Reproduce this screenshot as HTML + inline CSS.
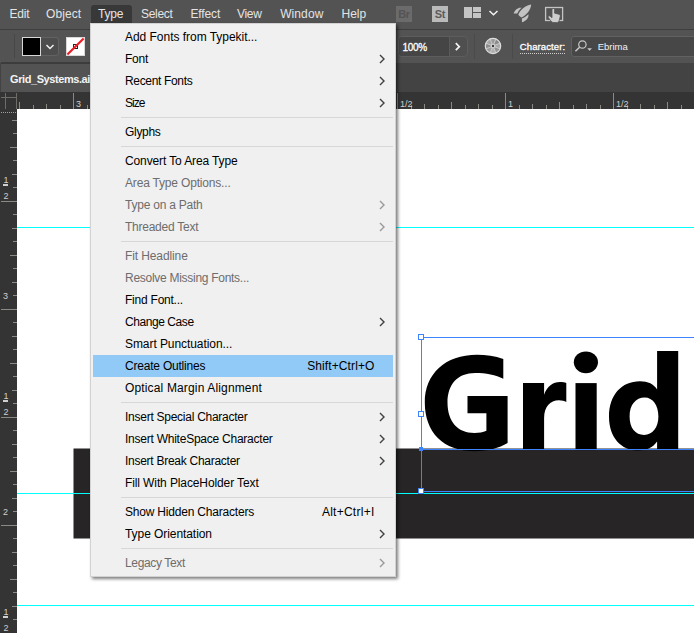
<!DOCTYPE html>
<html>
<head>
<meta charset="utf-8">
<style>
*{box-sizing:border-box;margin:0;padding:0}
html,body{width:694px;height:635px;overflow:hidden;background:#fff;font-family:"Liberation Sans",sans-serif;}
#app{position:relative;width:694px;height:635px;overflow:hidden;background:#fff}
.abs{position:absolute}
/* top bars */
#menubar{left:0;top:0;width:694px;height:29px;background:#535353}
#menubar span{position:absolute;top:6px;font-size:12px;color:#e4e4e4;line-height:16px;white-space:nowrap}
#typehl{left:91px;top:5px;width:41px;height:18px;background:#383838;border-radius:3px 3px 0 0}
#ctrlbar{left:0;top:29px;width:694px;height:34px;background:#535353;border-top:1px solid #3e3e3e}
#tabbar{left:0;top:63px;width:694px;height:29px;background:#434343}
#tab{left:1px;top:62px;width:150px;height:30px;background:#535353;border-top:2px solid #3c3c3c}
#tab span{position:absolute;left:9px;top:8px;font-size:11px;font-weight:bold;color:#f4f4f4;line-height:14px;letter-spacing:-0.42px;white-space:nowrap}
#hruler{left:0;top:92px;width:694px;height:17px;background:#343434}
#vruler{left:0;top:109px;width:17px;height:524px;background:#343434}
.rt{position:absolute;font-size:9px;color:#cfcfcf;line-height:10px;white-space:nowrap}
/* canvas */
/* menu */
#menu{left:90px;top:23px;width:306px;height:554px;background:#f0f0f0;border:1px solid #d2d2d2;box-shadow:2px 2px 3px rgba(0,0,0,.5)}
.mi{position:absolute;left:2px;width:300px;height:22px;font-size:12px;color:#000;line-height:22px;white-space:nowrap}
.mi .l{position:absolute;left:32px;top:0}
.mi .s{position:absolute;right:18.5px;top:0}
.mi.d{color:#6d6d6d}
.mi.h{background:#91c9f7}
.sep{position:absolute;left:30px;width:272px;height:1px;background:#d7d7d7}
.arr{position:absolute;left:286px;top:6px;width:6px;height:10px}
</style>
</head>
<body>
<div id="app">
  <!-- canvas -->
<!--CANVAS-->
<svg class="abs" style="left:0;top:0" width="694" height="635" viewBox="0 0 694 635">
  <rect x="17" y="227" width="677" height="1" fill="#00ffff" shape-rendering="crispEdges"/>
  <rect x="73.5" y="448.5" width="630" height="90" fill="#272525"/>
  <rect x="17" y="493" width="677" height="1" fill="#00ffff" shape-rendering="crispEdges"/>
  <rect x="17" y="605" width="677" height="1" fill="#00ffff" shape-rendering="crispEdges"/>
  <g fill="#000">
    <!-- G -->
    <path d="M503.3 359 C495 356 486 354.7 477 354.7 C445 354.7 424.8 374 424.8 402.4 C424.8 432 443 451.2 475 451.2 C488 451.2 499 448 507.6 443 L507.6 396.1 L467.5 396.1 L467.5 413.3 L486.4 413.3 L486.4 430.7 C483 432 479 433 474.5 433 C457 433 447.5 421 447.5 402.5 C447.5 384 458 373 475 373 C486 373 496 375 503.3 378.7 Z"/>
    <!-- r -->
    <path d="M523 383.1 L544.1 383.1 L544.1 394.8 C547 386.5 553 382 560 382 C562.5 382 564.8 382.3 566.3 382.9 L566.3 402 C564.5 401 562 400.3 559 400.3 C550 400.3 544.1 407 544.1 418 L544.1 450 L523 450 Z"/>
    <!-- i -->
    <rect x="575.5" y="383.1" width="21.2" height="67"/>
    <ellipse cx="585.9" cy="362.3" rx="12.1" ry="10.9"/>
    <!-- d -->
    <path d="M657.1 351.1 L678.2 351.1 L678.2 450 L657.1 450 L657.1 441.6 C653 447.5 646.5 450.6 638.5 450.6 C621 450.6 609 437.5 609 416.5 C609 395 621.5 381.2 640 381.2 C648 381.2 653.8 384 657.1 389.4 Z M658.4 416.5 C658.4 405.5 652.8 397.6 644.8 397.6 C635.6 397.6 629.6 405 629.6 416.5 C629.6 428 635.2 434.9 644.2 434.9 C652.4 434.9 658.4 427.5 658.4 416.5 Z" fill-rule="evenodd"/>
  </g>
  <g shape-rendering="crispEdges" fill="#3f84ff">
    <rect x="421" y="337" width="273" height="1"/>
    <rect x="421" y="337" width="1" height="155"/>
    <rect x="421" y="449" width="273" height="1"/>
    <rect x="421" y="491" width="273" height="1"/>
    <rect x="419" y="447" width="4" height="4"/>
  </g>
  <g shape-rendering="crispEdges" fill="#fff" stroke="#3f84ff" stroke-width="1">
    <rect x="418.5" y="334.5" width="5" height="5"/>
    <rect x="418.5" y="411.5" width="5" height="5"/>
    <rect x="418.5" y="488.5" width="5" height="5"/>
  </g>
</svg>
<!--/CANVAS-->

  <!-- bars -->
  <div id="menubar" class="abs">
    <div id="typehl" class="abs"></div>
    <span style="left:9.6px;letter-spacing:-0.25px">Edit</span>
    <span style="left:46px;letter-spacing:0.1px">Object</span>
    <span style="left:98px;letter-spacing:-0.2px">Type</span>
    <span style="left:141px;letter-spacing:-0.31px">Select</span>
    <span style="left:190.4px;letter-spacing:-0.11px">Effect</span>
    <span style="left:236.9px;letter-spacing:-0.27px">View</span>
    <span style="left:280.2px;letter-spacing:0.09px">Window</span>
    <span style="left:341.5px;letter-spacing:-0.02px">Help</span>
  </div>
  <div id="ctrlbar" class="abs"></div>
<!--CTRL-->
  <div class="abs" style="left:14px;top:34px;width:1px;height:24px;background:#474747"></div>
  <div class="abs" style="left:41px;top:37px;width:18px;height:19px;border:1px solid #626262;border-left:none;border-radius:0 3px 3px 0;background:#4d4d4d"></div>
  <div class="abs" style="left:22px;top:37px;width:19px;height:19px;background:#000;border:1px solid #d8d8d8"></div>
  <svg class="abs" style="left:45px;top:42.5px" width="10" height="8" viewBox="0 0 10 8"><path d="M1.5 2 L5 5.5 L8.5 2" fill="none" stroke="#f0f0f0" stroke-width="1.5"/></svg>
  <div class="abs" style="left:66px;top:37px;width:19px;height:19px;background:#fff;border:1px solid #d8d8d8"></div>
  <svg class="abs" style="left:66px;top:37px" width="19" height="19" viewBox="0 0 19 19"><rect x="7.5" y="7.5" width="4" height="4" fill="none" stroke="#222" stroke-width="1"/><path d="M1.4 17.6 L17.6 1.6" stroke="#ee1c24" stroke-width="2.1"/></svg>
  <!-- opacity -->
  <div class="abs" style="left:398px;top:36px;width:70px;height:21px;background:#4f4f4f;border:1px solid #5d5d5d;border-radius:4px"></div><div class="abs" style="left:399px;top:37px;width:51px;height:19px;background:#454545;border-radius:3px 0 0 3px;border-right:1px solid #5a5a5a"></div>
  
  <span class="abs" style="left:402.5px;top:41px;font-size:10px;line-height:13px;color:#fff;letter-spacing:-0.34px;-webkit-text-stroke:0.3px #fff">100%</span>
  <svg class="abs" style="left:454px;top:41px" width="8" height="11" viewBox="0 0 8 11"><path d="M1.8 2.2 L5.3 5.7 L1.8 9.2" fill="none" stroke="#f4f4f4" stroke-width="1.7"/></svg>
  <div class="abs" style="left:474px;top:34px;width:1px;height:25px;background:#4a4a4a"></div>
  <svg class="abs" style="left:484px;top:37px" width="18" height="18" viewBox="0 0 18 18"><path d="M9.0 9.0 L6.09 1.98 A7.6 7.6 0 0 1 11.91 1.98 Z" fill="#9a9a9a"/><path d="M9.0 9.0 L11.91 1.98 A7.6 7.6 0 0 1 16.02 6.09 Z" fill="#8a8a8a"/><path d="M9.0 9.0 L16.02 6.09 A7.6 7.6 0 0 1 16.02 11.91 Z" fill="#a8a8a8"/><path d="M9.0 9.0 L16.02 11.91 A7.6 7.6 0 0 1 11.91 16.02 Z" fill="#949494"/><path d="M9.0 9.0 L11.91 16.02 A7.6 7.6 0 0 1 6.09 16.02 Z" fill="#b0b0b0"/><path d="M9.0 9.0 L6.09 16.02 A7.6 7.6 0 0 1 1.98 11.91 Z" fill="#9e9e9e"/><path d="M9.0 9.0 L1.98 11.91 A7.6 7.6 0 0 1 1.98 6.09 Z" fill="#8e8e8e"/><path d="M9.0 9.0 L1.98 6.09 A7.6 7.6 0 0 1 6.09 1.98 Z" fill="#a4a4a4"/><path d="M9.0 9.0 L6.09 1.98 M9.0 9.0 L11.91 1.98 M9.0 9.0 L16.02 6.09 M9.0 9.0 L16.02 11.91 M9.0 9.0 L11.91 16.02 M9.0 9.0 L6.09 16.02 M9.0 9.0 L1.98 11.91 M9.0 9.0 L1.98 6.09" stroke="#d4d4d4" stroke-width="0.9" fill="none"/><circle cx="9" cy="9" r="7.7" fill="none" stroke="#dedede" stroke-width="1.2"/><circle cx="9" cy="9" r="2.3" fill="#d8d8d8"/><circle cx="9" cy="9" r="1.2" fill="#3a3a3a"/></svg>
  <div class="abs" style="left:512px;top:34px;width:1px;height:25px;background:#4a4a4a"></div>
  <span class="abs" style="left:519.8px;top:40.5px;font-size:9.5px;line-height:12px;color:#fff;letter-spacing:0.1px;-webkit-text-stroke:0.3px #fff;border-bottom:1px dotted #d0d0d0;white-space:nowrap">Character:</span>
  <div class="abs" style="left:571px;top:36px;width:130px;height:21px;background:#474747;border:1px solid #616161;border-radius:3px"></div>
  <svg class="abs" style="left:574px;top:39px" width="20" height="16" viewBox="0 0 20 16"><circle cx="8.4" cy="5.5" r="3.7" fill="none" stroke="#c8c8c8" stroke-width="1.2"/><path d="M5.6 8.2 L1.4 12.3" stroke="#c8c8c8" stroke-width="1.5"/><path d="M13.2 9.3 L18 9.3 L15.6 11.7 Z" fill="#c8c8c8"/></svg>
  <span class="abs" style="left:597.7px;top:40.5px;font-size:9.5px;line-height:12px;color:#f2f2f2;letter-spacing:0px">Ebrima</span>
<!--/CTRL-->
  <div id="tabbar" class="abs"></div>
  <div id="tab" class="abs"><span>Grid_Systems.ai</span></div>
  <!--ICONS-->
  <div class="abs" style="left:396px;top:6px;width:16px;height:16px;background:#6b6b6b;color:#545454;font-size:11px;font-weight:bold;line-height:16px;text-align:center;letter-spacing:-0.3px">Br</div>
  <div class="abs" style="left:432px;top:6px;width:16px;height:16px;background:#bababa;color:#5c5c5c;font-size:11px;font-weight:bold;line-height:16px;text-align:center;letter-spacing:-0.3px">St</div>
  <div class="abs" style="left:464px;top:7px;width:8px;height:11px;background:#c4c4c4"></div>
  <div class="abs" style="left:473px;top:7px;width:8px;height:5px;background:#c4c4c4"></div>
  <div class="abs" style="left:473px;top:13px;width:8px;height:5px;background:#c4c4c4"></div>
  <svg class="abs" style="left:488px;top:9px" width="11" height="8" viewBox="0 0 11 8"><path d="M1.5 2 L5.5 5.8 L9.5 2" fill="none" stroke="#f4f4f4" stroke-width="1.5"/></svg>
  <svg class="abs" style="left:512px;top:3px" width="22" height="22" viewBox="0 0 22 22"><g fill="#c3c3c3"><path d="M19.2 1.5 C13.5 2.3 8.3 6.8 6.3 11.6 C7 12.8 8.4 14.1 9.6 14.6 C14.3 12.2 18.8 7 19.2 1.5 Z"/><path d="M9.6 4.7 C6 4.2 3 6.6 1.6 10.5 L5.3 10.6 C6.1 8.4 7.6 6.3 9.6 4.7 Z"/><path d="M16.4 11.2 C17 14.6 14.6 17.6 10 19.3 L9.9 15.6 C12.3 14.6 14.6 13.1 16.4 11.2 Z"/></g></svg>
  <svg class="abs" style="left:544px;top:5px" width="21" height="19" viewBox="0 0 21 19"><rect x="1.6" y="2.5" width="17" height="13" fill="none" stroke="#c4c4c4" stroke-width="1.3"/><path d="M8 4.6 C8 3 10.6 3 10.6 4.6 L10.6 8.2 L14.8 9.2 C16 9.5 16.4 10.4 16.2 11.5 L15.4 15 C15 16.8 14 17.6 12.4 17.6 L10 17.6 C8.6 17.6 7.8 17.1 7 16.1 L4.3 12.6 C3.5 11.4 4.9 10.2 6 11.1 L8 12.7 Z" fill="#cdcdcd" stroke="#535353" stroke-width="0.8"/></svg>
<!--/ICONS-->
  <div id="hruler" class="abs"></div>
  <div id="vruler" class="abs"></div>
<!--RUL-->
<svg class="abs" style="left:0;top:92px" width="694" height="17" viewBox="0 0 694 17" shape-rendering="crispEdges"><rect x="19" y="10" width="1" height="7" fill="#8b8983"/><rect x="33" y="13" width="1" height="4" fill="#8b8983"/><rect x="46" y="12" width="1" height="5" fill="#8b8983"/><rect x="60" y="13" width="1" height="4" fill="#8b8983"/><rect x="73" y="1" width="1" height="16" fill="#8b8983"/><rect x="87" y="13" width="1" height="4" fill="#8b8983"/><rect x="100" y="12" width="1" height="5" fill="#8b8983"/><rect x="114" y="13" width="1" height="4" fill="#8b8983"/><rect x="127" y="10" width="1" height="7" fill="#8b8983"/><rect x="141" y="13" width="1" height="4" fill="#8b8983"/><rect x="154" y="12" width="1" height="5" fill="#8b8983"/><rect x="168" y="13" width="1" height="4" fill="#8b8983"/><rect x="181" y="1" width="1" height="16" fill="#8b8983"/><rect x="195" y="13" width="1" height="4" fill="#8b8983"/><rect x="208" y="12" width="1" height="5" fill="#8b8983"/><rect x="222" y="13" width="1" height="4" fill="#8b8983"/><rect x="235" y="10" width="1" height="7" fill="#8b8983"/><rect x="249" y="13" width="1" height="4" fill="#8b8983"/><rect x="262" y="12" width="1" height="5" fill="#8b8983"/><rect x="276" y="13" width="1" height="4" fill="#8b8983"/><rect x="289" y="1" width="1" height="16" fill="#8b8983"/><rect x="303" y="13" width="1" height="4" fill="#8b8983"/><rect x="316" y="12" width="1" height="5" fill="#8b8983"/><rect x="330" y="13" width="1" height="4" fill="#8b8983"/><rect x="343" y="10" width="1" height="7" fill="#8b8983"/><rect x="357" y="13" width="1" height="4" fill="#8b8983"/><rect x="370" y="12" width="1" height="5" fill="#8b8983"/><rect x="384" y="13" width="1" height="4" fill="#8b8983"/><rect x="397" y="1" width="1" height="16" fill="#8b8983"/><rect x="411" y="13" width="1" height="4" fill="#8b8983"/><rect x="424" y="12" width="1" height="5" fill="#8b8983"/><rect x="438" y="13" width="1" height="4" fill="#8b8983"/><rect x="451" y="10" width="1" height="7" fill="#8b8983"/><rect x="465" y="13" width="1" height="4" fill="#8b8983"/><rect x="478" y="12" width="1" height="5" fill="#8b8983"/><rect x="492" y="13" width="1" height="4" fill="#8b8983"/><rect x="505" y="1" width="1" height="16" fill="#8b8983"/><rect x="519" y="13" width="1" height="4" fill="#8b8983"/><rect x="532" y="12" width="1" height="5" fill="#8b8983"/><rect x="546" y="13" width="1" height="4" fill="#8b8983"/><rect x="559" y="10" width="1" height="7" fill="#8b8983"/><rect x="573" y="13" width="1" height="4" fill="#8b8983"/><rect x="586" y="12" width="1" height="5" fill="#8b8983"/><rect x="600" y="13" width="1" height="4" fill="#8b8983"/><rect x="613" y="1" width="1" height="16" fill="#8b8983"/><rect x="627" y="13" width="1" height="4" fill="#8b8983"/><rect x="640" y="12" width="1" height="5" fill="#8b8983"/><rect x="654" y="13" width="1" height="4" fill="#8b8983"/><rect x="667" y="10" width="1" height="7" fill="#8b8983"/><rect x="681" y="13" width="1" height="4" fill="#8b8983"/><rect x="694" y="12" width="1" height="5" fill="#8b8983"/><rect x="5" y="1" width="1" height="16" fill="#6f6d68"/><rect x="16" y="1" width="1" height="16" fill="#6f6d68"/><rect x="1" y="5" width="16" height="1" fill="#6f6d68"/></svg>
<span class="rt" style="left:76px;top:99px">3</span>
<span class="rt" style="left:184px;top:99px">1/2</span>
<span class="rt" style="left:400px;top:99px">1/2</span>
<span class="rt" style="left:508px;top:99px">1</span>
<span class="rt" style="left:616px;top:99px">1/2</span>
<svg class="abs" style="left:0;top:109px" width="17" height="526" viewBox="0 0 17 526" shape-rendering="crispEdges"><rect x="12" y="11" width="5" height="1" fill="#8b8983"/><rect x="13" y="24" width="4" height="1" fill="#8b8983"/><rect x="10" y="38" width="7" height="1" fill="#8b8983"/><rect x="13" y="51" width="4" height="1" fill="#8b8983"/><rect x="12" y="65" width="5" height="1" fill="#8b8983"/><rect x="13" y="78" width="4" height="1" fill="#8b8983"/><rect x="1" y="92" width="16" height="1" fill="#8b8983"/><rect x="13" y="105" width="4" height="1" fill="#8b8983"/><rect x="12" y="119" width="5" height="1" fill="#8b8983"/><rect x="13" y="132" width="4" height="1" fill="#8b8983"/><rect x="10" y="146" width="7" height="1" fill="#8b8983"/><rect x="13" y="159" width="4" height="1" fill="#8b8983"/><rect x="12" y="173" width="5" height="1" fill="#8b8983"/><rect x="13" y="186" width="4" height="1" fill="#8b8983"/><rect x="1" y="200" width="16" height="1" fill="#8b8983"/><rect x="13" y="213" width="4" height="1" fill="#8b8983"/><rect x="12" y="227" width="5" height="1" fill="#8b8983"/><rect x="13" y="240" width="4" height="1" fill="#8b8983"/><rect x="10" y="254" width="7" height="1" fill="#8b8983"/><rect x="13" y="267" width="4" height="1" fill="#8b8983"/><rect x="12" y="281" width="5" height="1" fill="#8b8983"/><rect x="13" y="294" width="4" height="1" fill="#8b8983"/><rect x="1" y="308" width="16" height="1" fill="#8b8983"/><rect x="13" y="321" width="4" height="1" fill="#8b8983"/><rect x="12" y="335" width="5" height="1" fill="#8b8983"/><rect x="13" y="348" width="4" height="1" fill="#8b8983"/><rect x="10" y="362" width="7" height="1" fill="#8b8983"/><rect x="13" y="375" width="4" height="1" fill="#8b8983"/><rect x="12" y="389" width="5" height="1" fill="#8b8983"/><rect x="13" y="402" width="4" height="1" fill="#8b8983"/><rect x="1" y="416" width="16" height="1" fill="#8b8983"/><rect x="13" y="429" width="4" height="1" fill="#8b8983"/><rect x="12" y="443" width="5" height="1" fill="#8b8983"/><rect x="13" y="456" width="4" height="1" fill="#8b8983"/><rect x="10" y="470" width="7" height="1" fill="#8b8983"/><rect x="13" y="483" width="4" height="1" fill="#8b8983"/><rect x="12" y="497" width="5" height="1" fill="#8b8983"/><rect x="13" y="510" width="4" height="1" fill="#8b8983"/><rect x="1" y="524" width="16" height="1" fill="#8b8983"/><rect x="1" y="3" width="1" height="1" fill="#a0a0a0"/><rect x="3" y="3" width="1" height="1" fill="#a0a0a0"/><rect x="5" y="3" width="1" height="1" fill="#a0a0a0"/><rect x="7" y="3" width="1" height="1" fill="#a0a0a0"/><rect x="9" y="3" width="1" height="1" fill="#a0a0a0"/><rect x="11" y="3" width="1" height="1" fill="#a0a0a0"/><rect x="13" y="3" width="1" height="1" fill="#a0a0a0"/><rect x="15" y="3" width="1" height="1" fill="#a0a0a0"/></svg>
<span class="rt" style="left:3.5px;top:175px">1</span><div class="abs" style="left:3px;top:184px;width:5px;height:2px;background:#cfcfcf"></div><span class="rt" style="left:3.5px;top:191px">2</span>
<span class="rt" style="left:3px;top:291px">3</span>
<span class="rt" style="left:3.5px;top:391px">1</span><div class="abs" style="left:3px;top:400px;width:5px;height:2px;background:#cfcfcf"></div><span class="rt" style="left:3.5px;top:407px">2</span>
<span class="rt" style="left:3px;top:507px">2</span>
<span class="rt" style="left:3.5px;top:607px">1</span><div class="abs" style="left:3px;top:616px;width:5px;height:2px;background:#cfcfcf"></div><span class="rt" style="left:3.5px;top:623px">2</span>
<!--/RUL-->
<div class="abs" style="left:0;top:633px;width:694px;height:2px;background:#fff"></div>

  <!-- menu -->
  <div id="menu" class="abs">
<!--MENU-->
<div class="mi" style="top:2px"><span class="l" style="letter-spacing:-0.03px">Add Fonts from Typekit...</span></div>
<div class="mi" style="top:24px"><span class="l" style="letter-spacing:-0.25px">Font</span><svg class="arr" viewBox="0 0 6 10"><path d="M1 1 L5 5 L1 9" fill="none" stroke="#404040" stroke-width="1.4"/></svg></div>
<div class="mi" style="top:46px"><span class="l" style="letter-spacing:-0.34px">Recent Fonts</span><svg class="arr" viewBox="0 0 6 10"><path d="M1 1 L5 5 L1 9" fill="none" stroke="#404040" stroke-width="1.4"/></svg></div>
<div class="mi" style="top:68px"><span class="l" style="letter-spacing:-0.99px">Size</span><svg class="arr" viewBox="0 0 6 10"><path d="M1 1 L5 5 L1 9" fill="none" stroke="#404040" stroke-width="1.4"/></svg></div>
<div class="mi" style="top:97px"><span class="l" style="letter-spacing:-0.31px">Glyphs</span></div>
<div class="mi" style="top:126px"><span class="l" style="letter-spacing:-0.12px">Convert To Area Type</span></div>
<div class="mi d" style="top:148px"><span class="l" style="letter-spacing:-0.18px">Area Type Options...</span></div>
<div class="mi d" style="top:170px"><span class="l" style="letter-spacing:-0.23px">Type on a Path</span><svg class="arr" viewBox="0 0 6 10"><path d="M1 1 L5 5 L1 9" fill="none" stroke="#9a9a9a" stroke-width="1.4"/></svg></div>
<div class="mi d" style="top:192px"><span class="l" style="letter-spacing:-0.25px">Threaded Text</span><svg class="arr" viewBox="0 0 6 10"><path d="M1 1 L5 5 L1 9" fill="none" stroke="#9a9a9a" stroke-width="1.4"/></svg></div>
<div class="mi d" style="top:221px"><span class="l" style="letter-spacing:-0.11px">Fit Headline</span></div>
<div class="mi d" style="top:243px"><span class="l" style="letter-spacing:-0.28px">Resolve Missing Fonts...</span></div>
<div class="mi" style="top:265px"><span class="l" style="letter-spacing:-0.23px">Find Font...</span></div>
<div class="mi" style="top:287px"><span class="l" style="letter-spacing:-0.43px">Change Case</span><svg class="arr" viewBox="0 0 6 10"><path d="M1 1 L5 5 L1 9" fill="none" stroke="#404040" stroke-width="1.4"/></svg></div>
<div class="mi" style="top:309px"><span class="l" style="letter-spacing:-0.07px">Smart Punctuation...</span></div>
<div class="mi h" style="top:331px"><span class="l" style="letter-spacing:-0.21px">Create Outlines</span><span class="s" style="letter-spacing:0.11px">Shift+Ctrl+O</span></div>
<div class="mi" style="top:353px"><span class="l" style="letter-spacing:0.15px">Optical Margin Alignment</span></div>
<div class="mi" style="top:382px"><span class="l" style="letter-spacing:-0.26px">Insert Special Character</span><svg class="arr" viewBox="0 0 6 10"><path d="M1 1 L5 5 L1 9" fill="none" stroke="#404040" stroke-width="1.4"/></svg></div>
<div class="mi" style="top:404px"><span class="l" style="letter-spacing:-0.24px">Insert WhiteSpace Character</span><svg class="arr" viewBox="0 0 6 10"><path d="M1 1 L5 5 L1 9" fill="none" stroke="#404040" stroke-width="1.4"/></svg></div>
<div class="mi" style="top:426px"><span class="l" style="letter-spacing:-0.27px">Insert Break Character</span><svg class="arr" viewBox="0 0 6 10"><path d="M1 1 L5 5 L1 9" fill="none" stroke="#404040" stroke-width="1.4"/></svg></div>
<div class="mi" style="top:448px"><span class="l" style="letter-spacing:-0.11px">Fill With PlaceHolder Text</span></div>
<div class="mi" style="top:477px"><span class="l" style="letter-spacing:-0.20px">Show Hidden Characters</span><span class="s" style="letter-spacing:0.26px">Alt+Ctrl+I</span></div>
<div class="mi" style="top:499px"><span class="l" style="letter-spacing:-0.07px">Type Orientation</span><svg class="arr" viewBox="0 0 6 10"><path d="M1 1 L5 5 L1 9" fill="none" stroke="#404040" stroke-width="1.4"/></svg></div>
<div class="mi d" style="top:528px"><span class="l" style="letter-spacing:-0.35px">Legacy Text</span><svg class="arr" viewBox="0 0 6 10"><path d="M1 1 L5 5 L1 9" fill="none" stroke="#9a9a9a" stroke-width="1.4"/></svg></div>
<div class="sep" style="top:93px"></div>
<div class="sep" style="top:122px"></div>
<div class="sep" style="top:217px"></div>
<div class="sep" style="top:378px"></div>
<div class="sep" style="top:473px"></div>
<div class="sep" style="top:524px"></div>
<!--/MENU-->
  </div>
</div>
</body>
</html>
